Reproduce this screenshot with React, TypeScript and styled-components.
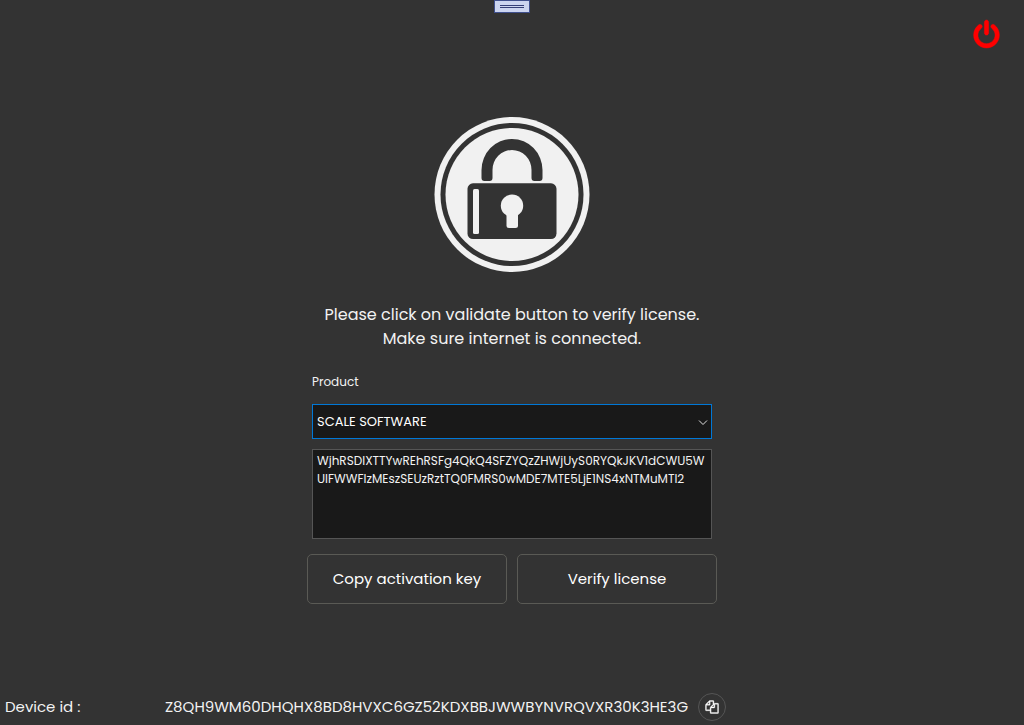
import React from "react";
import styled, { createGlobalStyle } from "styled-components";

const PRODUCTS = ["SCALE SOFTWARE"];
const ACTIVATION_KEY =
  "WjhRSDlXTTYwREhRSFg4QkQ4SFZYQzZHWjUyS0RYQkJKV1dCWU5W\nUlFWWFIzMEszSEUzRztTQ0FMRS0wMDE7MTE5LjE1NS4xNTMuMTI2";
const DEVICE_ID = "Z8QH9WM60DHQHX8BD8HVXC6GZ52KDXBBJWWBYNVRQVXR30K3HE3G";

const GlobalStyle = createGlobalStyle`
  * { box-sizing: border-box; }
  body {
    margin: 0;
    background: #333333;
    color: #f2f2f2;
    font-family: Poppins, Inter, "Liberation Sans", sans-serif;
  }
  button, select, textarea { font: inherit; color: inherit; }
`;

const Page = styled.div`
  position: relative;
  display: flex;
  flex-direction: column;
  min-height: 100vh;
`;

const Header = styled.header`
  display: flex;
  justify-content: flex-end;
  padding: 19px 23px 7px;
`;

const DragHandle = styled.div`
  position: absolute;
  top: 0;
  left: 50%;
  transform: translateX(-50%);
  display: flex;
  flex-direction: column;
  justify-content: center;
  align-items: center;
  gap: 1px;
  width: 36px;
  height: 13px;
  background: #ccd5f0;
  border: 1px solid #40508d;
`;

const HandleLine = styled.span`
  width: 24px;
  height: 1px;
  background: #353f78;
`;

const PowerButton = styled.button`
  display: flex;
  justify-content: center;
  align-items: center;
  width: 30px;
  height: 30px;
  padding: 0;
  border: 0;
  background: none;
  color: #ff0000;
  cursor: pointer;
`;

const Main = styled.main`
  flex: 1;
  display: flex;
  flex-direction: column;
  justify-content: center;
  align-items: center;
`;

const Message = styled.p`
  margin: 31px 0 21px;
  font-size: 16px;
  line-height: 24px;
  text-align: center;
`;

const Form = styled.form`
  display: flex;
  flex-direction: column;
  width: 100%;
  max-width: 410px;
`;

const Fields = styled.div`
  display: flex;
  flex-direction: column;
  gap: 10px;
  padding: 0 5px;
`;

const Label = styled.label`
  padding-bottom: 2px;
  font-size: 12px;
  line-height: 20px;
`;

const SelectBox = styled.div`
  position: relative;
`;

const Select = styled.select`
  display: block;
  appearance: none;
  width: 100%;
  height: 35px;
  padding: 0 24px 0 4px;
  border: 1px solid #0078d7;
  border-radius: 0;
  outline: none;
  background: #191919;
  color: #ffffff;
  font-size: 13px;
`;

const Chevron = styled.svg`
  position: absolute;
  right: 4px;
  top: 15px;
  pointer-events: none;
`;

const KeyBox = styled.textarea`
  display: block;
  width: 100%;
  height: 90px;
  padding: 2px 4px;
  border: 1px solid #555555;
  outline: none;
  resize: none;
  overflow: hidden;
  background: #191919;
  font-size: 12px;
  line-height: 18px;
  white-space: pre;
`;

const Actions = styled.div`
  display: flex;
  gap: 10px;
  margin-top: 15px;
`;

const ActionButton = styled.button`
  flex: 1;
  height: 50px;
  padding: 0 6px 2px;
  border: 1px solid #5a5a55;
  border-radius: 5px;
  background: none;
  color: #ffffff;
  font-size: 15px;
  cursor: pointer;
`;

const Footer = styled.footer`
  display: flex;
  align-items: center;
  padding: 28px 5px 4px;
  font-size: 15px;
  line-height: 24px;
`;

const DeviceLabel = styled.span`
  width: 160px;
`;

const CopyButton = styled.button`
  display: flex;
  justify-content: center;
  align-items: center;
  width: 28px;
  height: 28px;
  margin-left: 10px;
  padding: 0;
  border: 1px solid #555555;
  border-radius: 50%;
  background: none;
  color: #ffffff;
  cursor: pointer;
`;

const LockLogo = () => (
  <svg width="156" height="155" viewBox="-0.5 0 156 155" aria-hidden="true">
    <circle cx="77.5" cy="77.5" r="77.5" fill="#f1f1f1" />
    <circle cx="77.5" cy="77.5" r="71.5" fill="#333333" />
    <circle cx="77.5" cy="77.5" r="66.5" fill="#f1f1f1" />
    <path
      fill="#333333"
      d="M47 61V53a30.5 31 0 0 1 61 0v8q0 3-3 3h-5q-3 0-3-3V53a19.5 20 0 0 0-39 0v8q0 3-3 3h-5q-3 0-3-3z"
    />
    <rect x="33" y="66.3" width="89" height="55.7" rx="5.5" fill="#333333" />
    <rect x="38.5" y="72" width="6" height="45" rx="1.5" fill="#f1f1f1" />
    <circle cx="77.5" cy="88.7" r="11.2" fill="#f1f1f1" />
    <rect x="72" y="95" width="11.5" height="16" rx="2.5" fill="#f1f1f1" />
  </svg>
);

const PowerIcon = () => (
  <svg width="30" height="30" viewBox="-30 -30 1792 1724" fill="currentColor" stroke="currentColor" strokeWidth="30" aria-hidden="true">
    <path d="M1664 896q0 156-61 298t-164 245-245 164-298 61-298-61-245-164-164-245-61-298q0-182 80.500-343t226.500-270q43-32 95.500-25t83.500 50q32 42 24.500 94.500t-49.500 84.500q-98 74-151.500 181t-53.500 228q0 104 40.500 198.500t109.500 163.500 163.500 109.500 198.500 40.500 198.500-40.500 163.500-109.500 109.500-163.500 40.500-198.500q0-121-53.500-228t-151.500-181q-42-32-49.500-84.500t24.500-94.500q31-43 84-50t95 25q146 109 226.500 270t80.500 343zm-640-768v640q0 52-38 90t-90 38-90-38-38-90v-640q0-52 38-90t90-38 90 38 38 90z" />
  </svg>
);

const CopyIcon = () => (
  <svg width="14" height="14" viewBox="-64 -64 1920 1920" fill="currentColor" stroke="currentColor" strokeWidth="50" aria-hidden="true">
    <path d="M1696 384q40 0 68 28t28 68v1216q0 40-28 68t-68 28h-960q-40 0-68-28t-28-68v-288h-544q-40 0-68-28t-28-68v-672q0-40 20-88t48-76l408-408q28-28 76-48t88-20h416q40 0 68 28t28 68v328q68-40 128-40h416zm-544 213l-299 299h299v-299zm-640-384l-299 299h299v-299zm196 647l316-316v-416h-384v416q0 40-28 68t-68 28h-416v640h512v-256q0-40 20-88t48-76zm956 804v-1152h-384v416q0 40-28 68t-68 28h-416v640h896z" />
  </svg>
);

export default function App() {
  return (
    <Page>
      <GlobalStyle />
      <Header>
        <DragHandle>
          <HandleLine />
          <HandleLine />
        </DragHandle>
        <PowerButton type="button" aria-label="Exit">
          <PowerIcon />
        </PowerButton>
      </Header>
      <Main>
        <LockLogo />
        <Message>
          Please click on validate button to verify license.
          <br />
          Make sure internet is connected.
        </Message>
        <Form onSubmit={(e) => e.preventDefault()}>
          <Fields>
            <Label htmlFor="product">Product</Label>
            <SelectBox>
              <Select id="product">
                {PRODUCTS.map((name) => (
                  <option key={name}>{name}</option>
                ))}
              </Select>
              <Chevron width="10" height="7" viewBox="0 0 10 7" fill="none" stroke="#e0e0e0" aria-hidden="true">
                <path d="M1 1.5l4 4 4-4" />
              </Chevron>
            </SelectBox>
            <KeyBox aria-label="Activation key" readOnly spellCheck={false} value={ACTIVATION_KEY} />
          </Fields>
          <Actions>
            <ActionButton type="button">Copy activation key</ActionButton>
            <ActionButton type="submit">Verify license</ActionButton>
          </Actions>
        </Form>
      </Main>
      <Footer>
        <DeviceLabel>Device id :</DeviceLabel>
        <span>{DEVICE_ID}</span>
        <CopyButton type="button" aria-label="Copy device id">
          <CopyIcon />
        </CopyButton>
      </Footer>
    </Page>
  );
}
